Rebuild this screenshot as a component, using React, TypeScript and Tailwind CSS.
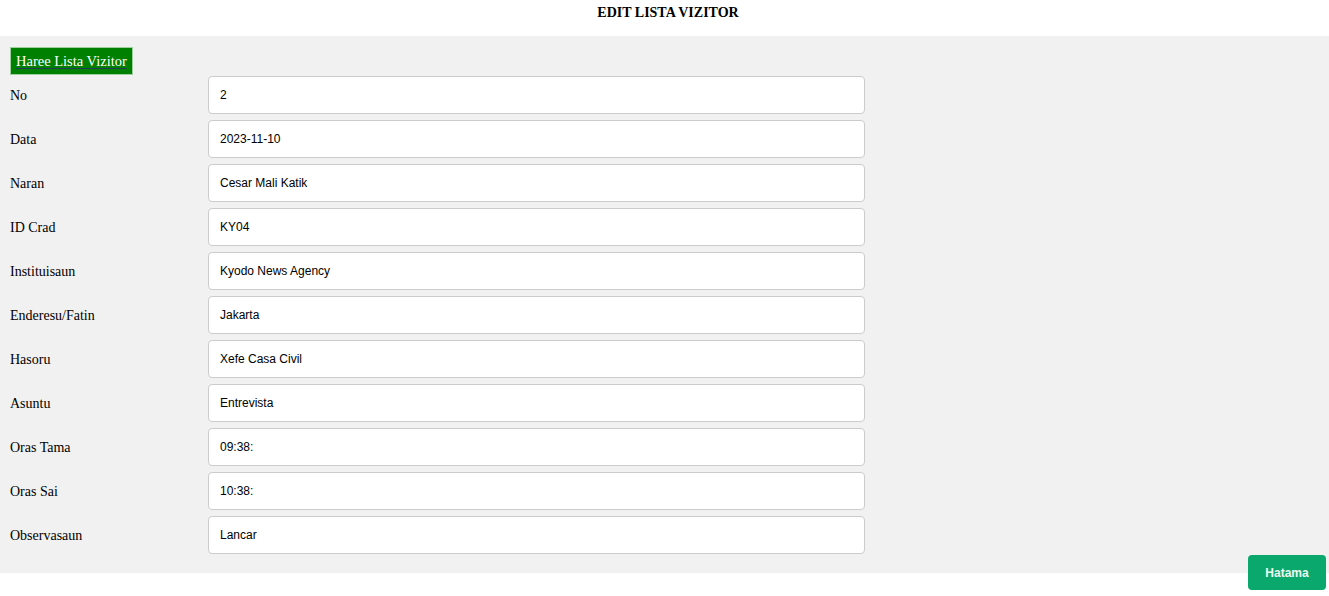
import React from "react";

const rows = [
  { label: "No", value: "2" },
  { label: "Data", value: "2023-11-10" },
  { label: "Naran", value: "Cesar Mali Katik" },
  { label: "ID Crad", value: "KY04" },
  { label: "Instituisaun", value: "Kyodo News Agency" },
  { label: "Enderesu/Fatin", value: "Jakarta" },
  { label: "Hasoru", value: "Xefe Casa Civil" },
  { label: "Asuntu", value: "Entrevista" },
  { label: "Oras Tama", value: "09:38:" },
  { label: "Oras Sai", value: "10:38:" },
  { label: "Observasaun", value: "Lancar" },
];

const App = () => {
  return (
    <div className="w-[1329px] h-[596px] bg-white font-['Liberation_Serif',serif] text-black overflow-hidden">
      {/* title */}
      <div className="h-[36px] pt-[4px] pl-[7px] text-center text-[14px] font-bold leading-[18px]">EDIT LISTA VIZITOR</div>

      {/* form panel */}
      <div className="bg-[#f1f1f1] pt-[11px] pb-[19px] pl-[10px]">
        <button className="h-[28px] px-[5px] bg-[#008000] border border-[#9fcf9f] text-white text-[14.5px] leading-[26px] underline decoration-[#23395d] underline-offset-2">
          Haree Lista Vizitor
        </button>
        <div className="mt-[1px] flex flex-col gap-[6px]">
          {rows.map((r) => (
            <div key={r.label} className="flex items-center h-[38px]">
              <label className="w-[198px] text-[14px]">{r.label}</label>
              <input
                readOnly
                value={r.value}
                className="w-[657px] h-[38px] bg-white border border-[#cccccc] rounded-[4px] px-[11px] text-[12px] font-['Liberation_Sans',sans-serif] text-black outline-none"
              />
            </div>
          ))}
        </div>
      </div>

      <div className="flex justify-end pr-[3px] -mt-[18px]">
        <button className="w-[78px] h-[35px] rounded-[4px] bg-[#0aa86c] text-[#eef8f2] text-[12px] font-semibold font-['Liberation_Sans',sans-serif]">
          Hatama
        </button>
      </div>
    </div>
  );
};

export default App;
